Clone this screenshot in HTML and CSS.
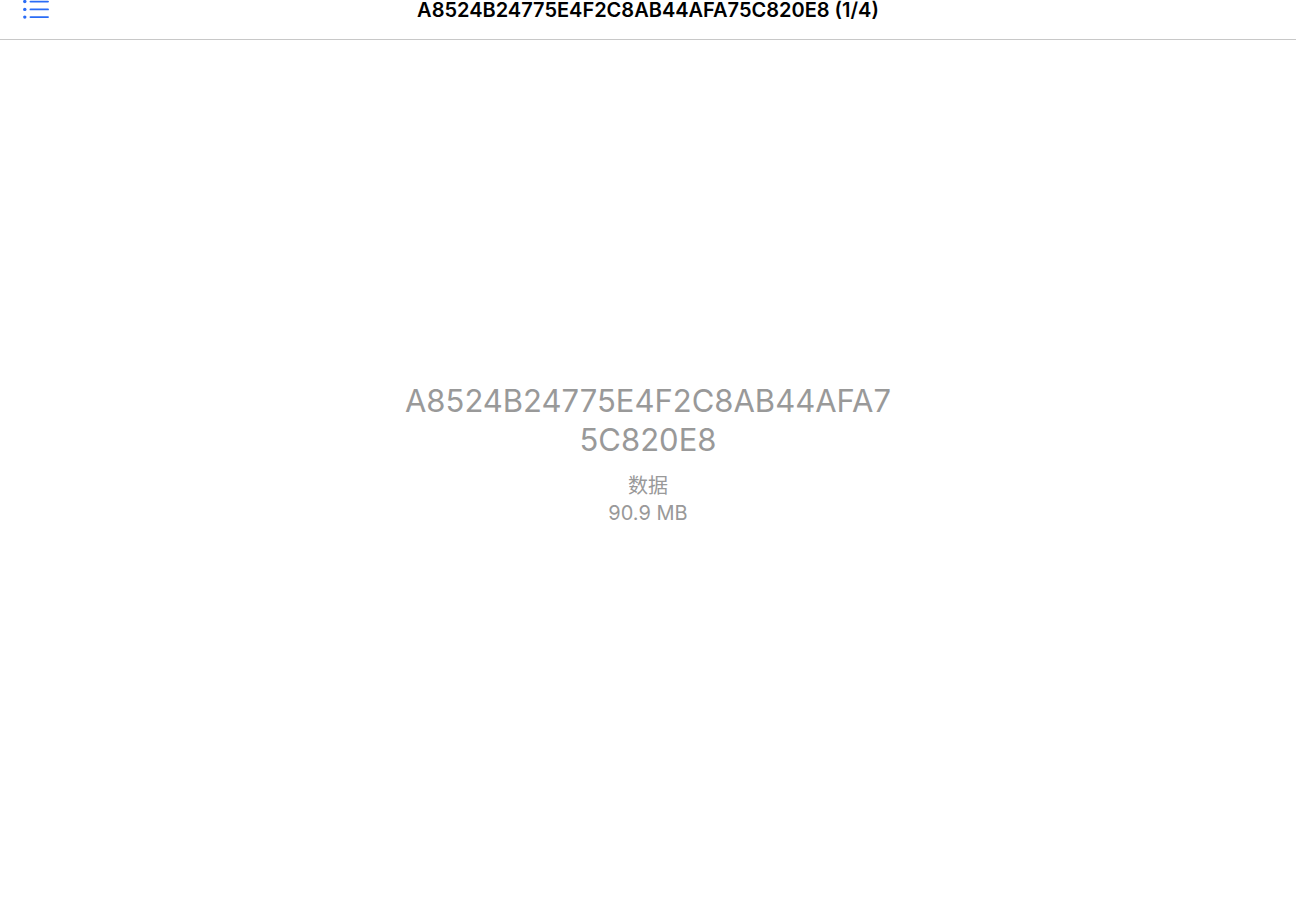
FILE: index.html
```html
<!DOCTYPE html>
<html lang="zh-CN">
<head>
  <meta charset="UTF-8">
  <meta name="viewport" content="width=device-width, initial-scale=1">
  <title>A8524B24775E4F2C8AB44AFA75C820E8</title>
  <link rel="stylesheet" href="styles.css">
</head>
<body>

  <header class="navbar">
    <button type="button" class="list-button" aria-label="列表">
      <svg width="26" height="20" viewBox="0 0 26 20" fill="none" stroke="currentColor" stroke-width="1.9" stroke-linecap="round">
        <path d="M7.5 1.6H25M7.5 9.4H25M7.5 17.1H25" />
        <g fill="currentColor" stroke="none">
          <circle cx="1.8" cy="1.6" r="1.7" />
          <circle cx="1.8" cy="9.4" r="1.7" />
          <circle cx="1.8" cy="17.1" r="1.7" />
        </g>
      </svg>
    </button>
    <h1 class="title">A8524B24775E4F2C8AB44AFA75C820E8 (1/4)</h1>
  </header>

  <main class="preview">
    <h2 class="file-name">A8524B24775E4F2C8AB44AFA75C820E8</h2>
    <p class="file-info">数据</p>
    <p class="file-info">90.9 MB</p>
  </main>

</body>
</html>
```
FILE: styles.css
```css
* {
  box-sizing: border-box;
}
body {
  margin: 0;
  min-height: 100vh;
  display: flex;
  flex-direction: column;
  background-color: #fff;
  font-family: Inter, "Noto Sans CJK SC", sans-serif;
}
.navbar {
  display: grid;
  grid-template-columns: 1fr auto 1fr;
  align-items: start;
  height: 40px;
  padding: 0 23px;
  border-bottom: 1px solid #c8c8c8;
}
.list-button {
  justify-self: start;
  padding: 0;
  border: none;
  background: none;
  color: #2a6cf6;
}
.list-button svg {
  display: block;
}
.title {
  margin: 0;
  font-size: 20px;
  font-weight: 600;
  line-height: 20px;
  color: #000;
}
.preview {
  flex: 1;
  display: flex;
  flex-direction: column;
  align-items: center;
  justify-content: center;
  padding-bottom: 38px;
  color: #999;
  text-align: center;
}
.file-name {
  width: 100%;
  max-width: 500px;
  margin: 0 0 14px;
  font-size: 31px;
  font-weight: 400;
  line-height: 39px;
  word-break: break-all;
}
.file-info {
  margin: 0;
  font-size: 20px;
  line-height: 27px;
}
```
